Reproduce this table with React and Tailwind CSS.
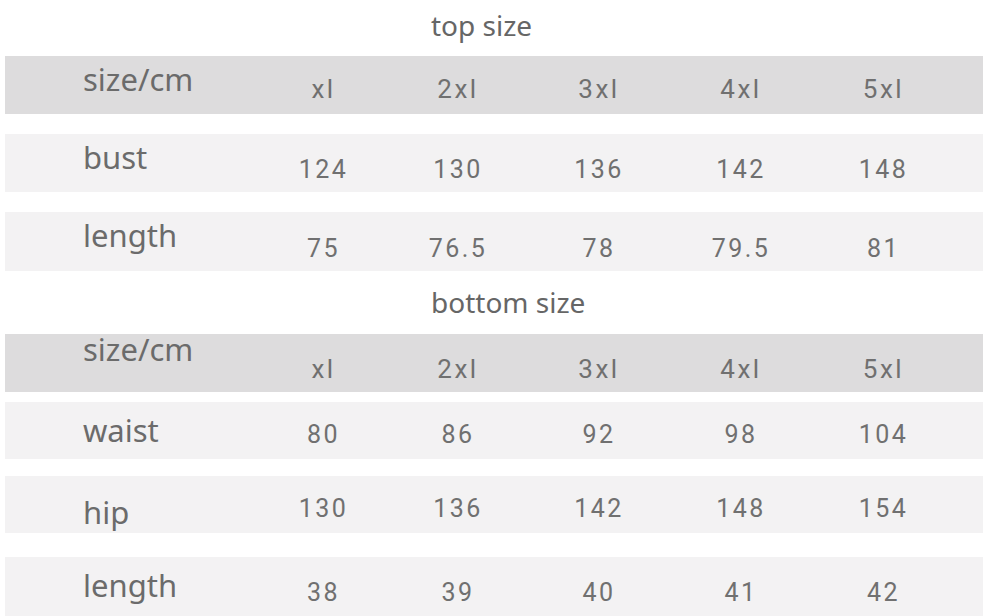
const sizes = ['xl', '2xl', '3xl', '4xl', '5xl']

// label column + five value columns, centres taken from the chart
const cols = 'grid grid-cols-[254px_129px_140px_142px_142px_143px_1fr]'

function Row({ label, values, className, labelPad, valuePad }) {
    return (
        <div className={`${cols} ${className}`}>
            <div className={`pl-[78px] text-[31px] leading-none text-[#6b6b6b] font-['Noto_Sans',sans-serif] ${labelPad}`}>
                {label}
            </div>
            {values.map((v, i) => (
                <div
                    key={i}
                    className={`text-center leading-none tracking-[2.5px] text-[#707070] font-['Roboto',sans-serif] ${valuePad}`}
                >
                    {v}
                </div>
            ))}
            <div />
        </div>
    )
}

export default function App() {
    return (
        <div className="w-[983px] h-[616px] overflow-hidden bg-white pl-[5px]">
            <div className="h-[56px] pt-[11px] pl-[426px] text-[28px] leading-none text-[#666] font-['Noto_Sans',sans-serif]">
                top size
            </div>
            <Row label="size/cm" values={sizes} className="h-[58px] bg-[#dddcdd]" labelPad="pt-[8px]" valuePad="pt-[20px] text-[26px]" />
            <Row label="bust" values={[124, 130, 136, 142, 148]} className="h-[58px] mt-[20px] bg-[#f3f2f3]" labelPad="pt-[8px]" valuePad="pt-[23px] text-[25px]" />
            <Row label="length" values={[75, 76.5, 78, 79.5, 81]} className="h-[59px] mt-[20px] bg-[#f3f2f3]" labelPad="pt-[8px]" valuePad="pt-[24px] text-[25px]" />

            <div className="h-[63px] pt-[17px] pl-[426px] text-[28px] leading-none text-[#666] font-['Noto_Sans',sans-serif]">
                bottom size
            </div>
            <Row label="size/cm" values={sizes} className="h-[58px] bg-[#dddcdd]" labelPad="pt-[0px]" valuePad="pt-[22px] text-[26px]" />
            <Row label="waist" values={[80, 86, 92, 98, 104]} className="h-[57px] mt-[10px] bg-[#f3f2f3]" labelPad="pt-[13px]" valuePad="pt-[20px] text-[25px]" />
            <Row label="hip" values={[130, 136, 142, 148, 154]} className="h-[57px] mt-[17px] bg-[#f3f2f3]" labelPad="pt-[21px]" valuePad="pt-[20px] text-[25px]" />
            <Row label="length" values={[38, 39, 40, 41, 42]} className="h-[59px] mt-[24px] bg-[#f3f2f3]" labelPad="pt-[13px]" valuePad="pt-[23px] text-[25px]" />
        </div>
    )
}
